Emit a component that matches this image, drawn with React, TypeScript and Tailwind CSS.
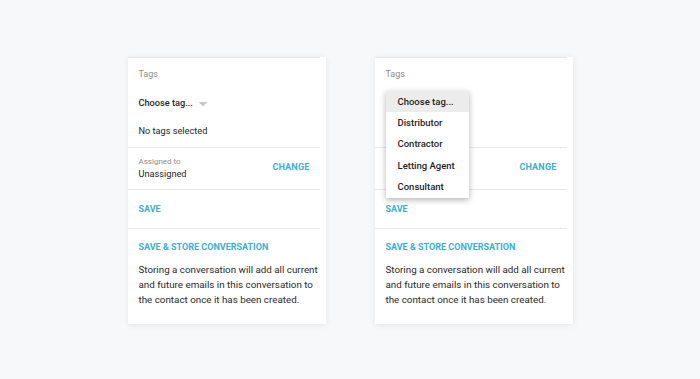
import React from "react";

const BLUE = "text-[#3aafd9]";

function Sep() {
  return <div className="mr-[6px] border-t border-[#e8e8e8]" />;
}

function Card({ open }: { open?: boolean }) {
  const hid = open ? " invisible" : "";
  return (
    <div className="relative w-[198px] h-[267px] bg-white shadow-[0_1px_6px_rgba(0,0,0,0.08)] font-['Roboto',sans-serif] text-[#1f1f1f]">
      <Sep />
      <div className="px-[11px] pt-[9px] pb-[9px]">
        <div className="text-[9px] leading-[14px] text-[#8c8c8c]">Tags</div>
        <div className={"mt-[15px] flex items-center gap-[6px] text-[9.2px] leading-[14px] font-medium" + hid}>
          <span>Choose tag...</span>
          <svg width="8" height="5" viewBox="0 0 8 5" className="mt-[2px]">
            <path d="M0 0 L8 0 L4 4.5 Z" fill="#c4c4c4" />
          </svg>
        </div>
        <div className={"mt-[14px] text-[9.2px] leading-[14px]" + hid}>No tags selected</div>
      </div>
      <Sep />
      <div className="flex items-center justify-between pl-[11px] pr-[16px] pt-[8px] pb-[9px]">
        <div className={hid}>
          <div className="text-[8px] leading-[11px] text-[#8c8c8c]">Assigned to</div>
          <div className="text-[9.2px] leading-[13px]">Unassigned</div>
        </div>
        <div className={`text-[9px] font-bold tracking-[0.2px] ${BLUE}`}>CHANGE</div>
      </div>
      <Sep />
      <div className="px-[11px] pt-[13px] pb-[13px]">
        <div className={`text-[9px] leading-[12px] font-bold ${BLUE}`}>SAVE</div>
      </div>
      <Sep />
      <div className="pl-[11px] pt-[12px]">
        <div className={`text-[9px] leading-[12px] font-bold ${BLUE}`}>SAVE &amp; STORE CONVERSATION</div>
        <p className="mt-[9px] whitespace-nowrap text-[9.8px] leading-[15px] text-[#2a2a2a]">
          Storing a conversation will add all current
          <br />
          and future emails in this conversation to
          <br />
          the contact once it has been created.
        </p>
      </div>
      {open && (
        <div className="absolute left-[11px] top-[34px] w-[83px] bg-white shadow-[0_2px_6px_rgba(0,0,0,0.3)] text-[9.5px] font-medium text-[#1f1f1f]">
          {["Choose tag...", "Distributor", "Contractor", "Letting Agent", "Consultant"].map((t, i) => (
            <div
              key={t}
              className={"h-[21.4px] flex items-center pl-[12px] " + (i === 0 ? "bg-[#ececec]" : "")}
            >
              {t}
            </div>
          ))}
        </div>
      )}
    </div>
  );
}

export default function App() {
  return (
    <div className="w-[700px] h-[379px] bg-[#f7f8fa] flex items-start justify-center gap-[49px] pt-[57px]">
      <Card />
      <Card open />
    </div>
  );
}
